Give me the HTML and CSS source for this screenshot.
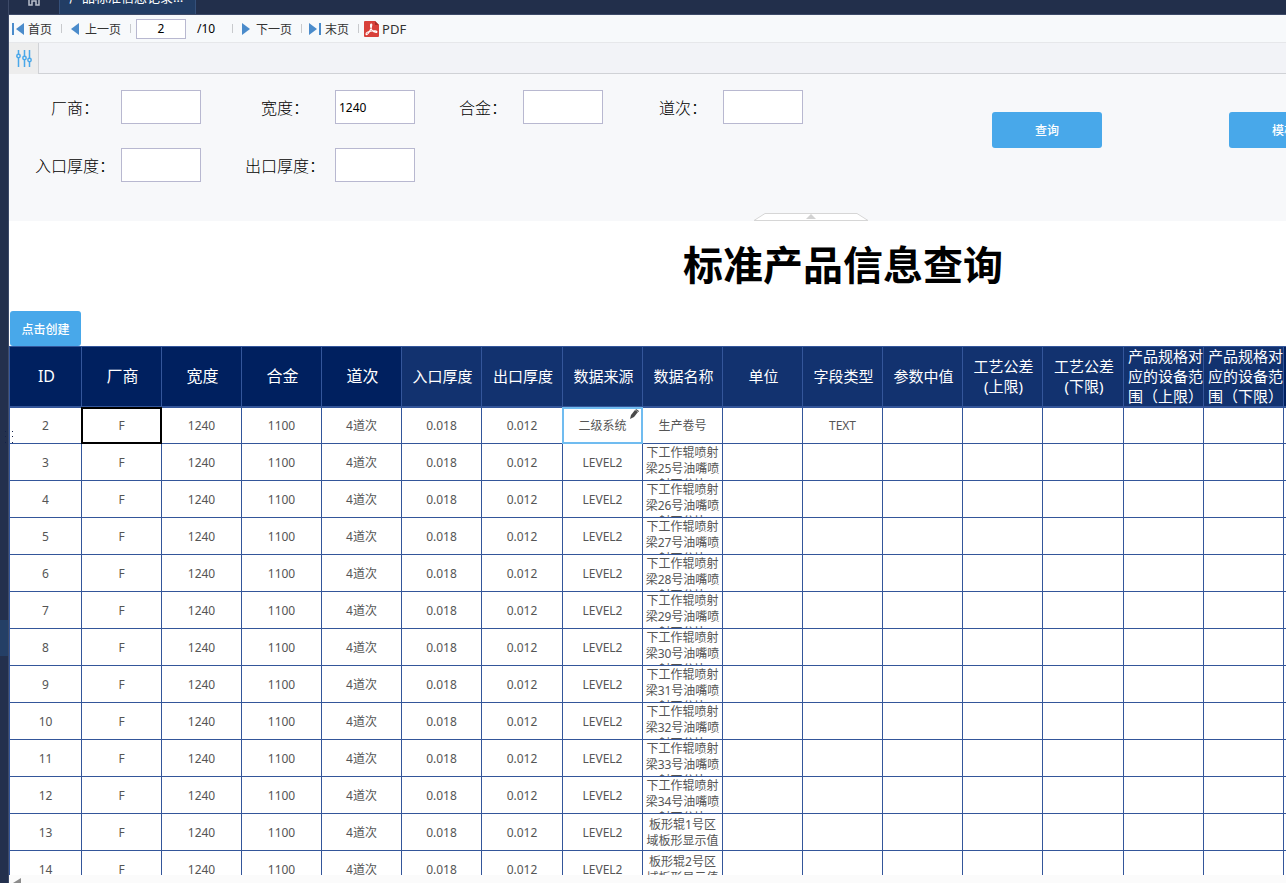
FILE: index.html
```html
<!DOCTYPE html>
<html lang="zh-CN">
<head>
    <meta charset="UTF-8">
    <title>标准产品信息查询</title>
    <link rel="stylesheet" href="styles.css">
</head>
<body>
    <aside class="sidebar">
        <div class="sidebar-active"></div>
        <svg class="sidebar-grip" width="8" height="12" viewBox="0 0 8 12" fill="#14224a"><path d="M0 0h1v1H0zM0 5h1v1H0zM0 11h1v1H0zM7 0h1v1H7zM7 5h1v1H7zM7 11h1v1H7z"/></svg>
    </aside>

    <div class="main">
        <nav class="tabs">
            <a href="#" class="tab-home" aria-label="首页">
                <svg width="14" height="14" viewBox="0 0 14 14" fill="none" stroke="#b9c0cc" stroke-width="1.5">
                    <path d="M1 7l6-6 6 6M2 6v7h3V9h4v4h3V6"/>
                </svg>
            </a>
            <a href="#" class="tab">产品标准信息记录…</a>
        </nav>

        <div class="toolbar">
            <button class="tool">
                <svg width="12" height="12" viewBox="0 0 12 12" fill="#4a8bcb"><path d="M0 0h2v12H0zM12 0v12L4 6z"/></svg>首页
            </button>
            <span class="sep"></span>
            <button class="tool tool-prev">
                <svg width="8" height="12" viewBox="0 0 8 12" fill="#4a8bcb"><path d="M8 0v12L0 6z"/></svg>上一页
            </button>
            <span class="sep"></span>
            <input class="page-input" type="text" value="2" aria-label="页码">
            <span class="page-total">/10</span>
            <span class="sep"></span>
            <button class="tool tool-next">
                <svg width="8" height="12" viewBox="0 0 8 12" fill="#4a8bcb"><path d="M0 0v12l8-6z"/></svg>下一页
            </button>
            <span class="sep"></span>
            <button class="tool tool-last">
                <svg width="12" height="12" viewBox="0 0 12 12" fill="#4a8bcb"><path d="M0 0v12l8-6zM10 0h2v12h-2z"/></svg>末页
            </button>
            <span class="sep"></span>
            <button class="tool tool-pdf">
                <svg width="15" height="16" viewBox="0 0 15 16">
                    <path d="M1 0h10l4 4v11a1 1 0 0 1-1 1H1a1 1 0 0 1-1-1V1a1 1 0 0 1 1-1z" fill="#d8403a"/>
                    <path d="M11 0l4 4h-4z" fill="#a82a25"/>
                    <path d="M2 13c0-1.500 3-2.600 6-3 2-.3 5-.2 5 .8 0 1.200-3 .4-4.500-1C7 8.300 6.300 5 6.600 3.600c.3-1 1.200-.7 1.200.5 0 2-1.600 5.600-3 7.700C3.800 13.300 2 14.300 2 13z" fill="none" stroke="#fff" stroke-width="1.100"/>
                </svg>PDF
            </button>
        </div>

        <div class="param-bar">
            <button class="param-toggle" aria-label="参数面板">
                <svg width="16" height="17" viewBox="0 0 16 17" fill="none" stroke="#4aa8ea" stroke-width="1.500">
                    <path d="M2.500 0v4M2.500 8v9M8.500 0v6M8.500 10v7M13.500 0v8M13.500 12v5"/>
                    <circle cx="2.500" cy="6" r="1.700"/><circle cx="8.500" cy="8" r="1.700"/><circle cx="13.500" cy="10" r="1.700"/>
                </svg>
            </button>
        </div>

        <form class="query">
            <div class="fields">
                <div class="field"><label for="vendor">厂商：</label><input id="vendor" type="text"></div>
                <div class="field field-wide"><label for="width">宽度：</label><input id="width" type="text" value="1240"></div>
                <div class="field field-narrow"><label for="alloy">合金：</label><input id="alloy" type="text"></div>
                <div class="field field-narrow"><label for="pass">道次：</label><input id="pass" type="text"></div>
                <div class="field"><label for="inlet">入口厚度：</label><input id="inlet" type="text"></div>
                <div class="field field-wide"><label for="outlet">出口厚度：</label><input id="outlet" type="text"></div>
            </div>
            <div class="actions">
                <button type="button" class="btn">查询</button>
                <button type="button" class="btn">模板</button>
            </div>
            <button type="button" class="collapse" aria-label="收起">
                <svg width="116" height="8" viewBox="0 0 116 8">
                    <path d="M1 7.500L12 .5h92l11 7z" fill="#fff" stroke="#d6d6d6"/>
                    <path d="M53 6l5-5 5 5z" fill="#d2d2d2"/>
                </svg>
            </button>
        </form>

        <div class="report">
            <h1>标准产品信息查询</h1>
            <button class="btn btn-create">点击创建</button>
            <table>
                <colgroup>
                    <col class="c-id"><col span="5" class="c"><col class="c-wide"><col span="6" class="c"><col class="c-wide"><col span="3" class="c">
                </colgroup>
                <thead>
                    <tr>
                        <th class="key">ID</th><th class="key">厂商</th><th class="key">宽度</th><th class="key">合金</th><th class="key">道次</th>
                        <th>入口厚度</th><th>出口厚度</th><th>数据来源</th><th>数据名称</th><th>单位</th><th>字段类型</th><th>参数中值</th>
                        <th>工艺公差<br>(上限)</th><th>工艺公差<br>(下限)</th><th><div class="long">产品规格对应的设备范围（上限）</div></th><th><div class="long">产品规格对应的设备范围（下限）</div></th><th class="key"></th>
                    </tr>
                </thead>
                <tbody>
                    <tr><td>2</td><td class="selected">F</td><td>1240</td><td>1100</td><td>4道次</td><td>0.018</td><td>0.012</td><td class="editing">二级系统<svg class="pen" width="9" height="10" viewBox="0 0 9 10" fill="#4a4a4a"><path d="M0 10l1-4 4-5 3 2-4 5z"/><path d="M6 0l3 2-.5 1-3-2z"/></svg></td><td>生产卷号</td><td></td><td>TEXT</td><td></td><td></td><td></td><td></td><td></td><td></td></tr>
                    <tr><td>3</td><td>F</td><td>1240</td><td>1100</td><td>4道次</td><td>0.018</td><td>0.012</td><td>LEVEL2</td><td><div class="clip">下工作辊喷射梁25号油嘴喷射百分比</div></td><td></td><td></td><td></td><td></td><td></td><td></td><td></td><td></td></tr>
                    <tr><td>4</td><td>F</td><td>1240</td><td>1100</td><td>4道次</td><td>0.018</td><td>0.012</td><td>LEVEL2</td><td><div class="clip">下工作辊喷射梁26号油嘴喷射百分比</div></td><td></td><td></td><td></td><td></td><td></td><td></td><td></td><td></td></tr>
                    <tr><td>5</td><td>F</td><td>1240</td><td>1100</td><td>4道次</td><td>0.018</td><td>0.012</td><td>LEVEL2</td><td><div class="clip">下工作辊喷射梁27号油嘴喷射百分比</div></td><td></td><td></td><td></td><td></td><td></td><td></td><td></td><td></td></tr>
                    <tr><td>6</td><td>F</td><td>1240</td><td>1100</td><td>4道次</td><td>0.018</td><td>0.012</td><td>LEVEL2</td><td><div class="clip">下工作辊喷射梁28号油嘴喷射百分比</div></td><td></td><td></td><td></td><td></td><td></td><td></td><td></td><td></td></tr>
                    <tr><td>7</td><td>F</td><td>1240</td><td>1100</td><td>4道次</td><td>0.018</td><td>0.012</td><td>LEVEL2</td><td><div class="clip">下工作辊喷射梁29号油嘴喷射百分比</div></td><td></td><td></td><td></td><td></td><td></td><td></td><td></td><td></td></tr>
                    <tr><td>8</td><td>F</td><td>1240</td><td>1100</td><td>4道次</td><td>0.018</td><td>0.012</td><td>LEVEL2</td><td><div class="clip">下工作辊喷射梁30号油嘴喷射百分比</div></td><td></td><td></td><td></td><td></td><td></td><td></td><td></td><td></td></tr>
                    <tr><td>9</td><td>F</td><td>1240</td><td>1100</td><td>4道次</td><td>0.018</td><td>0.012</td><td>LEVEL2</td><td><div class="clip">下工作辊喷射梁31号油嘴喷射百分比</div></td><td></td><td></td><td></td><td></td><td></td><td></td><td></td><td></td></tr>
                    <tr><td>10</td><td>F</td><td>1240</td><td>1100</td><td>4道次</td><td>0.018</td><td>0.012</td><td>LEVEL2</td><td><div class="clip">下工作辊喷射梁32号油嘴喷射百分比</div></td><td></td><td></td><td></td><td></td><td></td><td></td><td></td><td></td></tr>
                    <tr><td>11</td><td>F</td><td>1240</td><td>1100</td><td>4道次</td><td>0.018</td><td>0.012</td><td>LEVEL2</td><td><div class="clip">下工作辊喷射梁33号油嘴喷射百分比</div></td><td></td><td></td><td></td><td></td><td></td><td></td><td></td><td></td></tr>
                    <tr><td>12</td><td>F</td><td>1240</td><td>1100</td><td>4道次</td><td>0.018</td><td>0.012</td><td>LEVEL2</td><td><div class="clip">下工作辊喷射梁34号油嘴喷射百分比</div></td><td></td><td></td><td></td><td></td><td></td><td></td><td></td><td></td></tr>
                    <tr><td>13</td><td>F</td><td>1240</td><td>1100</td><td>4道次</td><td>0.018</td><td>0.012</td><td>LEVEL2</td><td>板形辊1号区域板形显示值</td><td></td><td></td><td></td><td></td><td></td><td></td><td></td><td></td></tr>
                    <tr><td>14</td><td>F</td><td>1240</td><td>1100</td><td>4道次</td><td>0.018</td><td>0.012</td><td>LEVEL2</td><td>板形辊2号区域板形显示值</td><td></td><td></td><td></td><td></td><td></td><td></td><td></td><td></td></tr>
                </tbody>
            </table>
        </div>

        <div class="hscroll">
            <svg width="9" height="10" viewBox="0 0 9 10" fill="#8c8c8c"><path d="M8 0v10L0 5z"/></svg>
        </div>
    </div>
</body>
</html>
```

FILE: styles.css
```css
* {
    box-sizing: border-box;
}

body {
    margin: 0;
    display: flex;
    height: 100vh;
    overflow: hidden;
    background: #fff;
    color: #555;
    font-family: "Noto Sans", "Noto Sans CJK SC", sans-serif;
    font-size: 12px;
}

button, input {
    font: inherit;
}

button {
    padding: 0;
    border: none;
    background: none;
    cursor: pointer;
}

svg {
    display: block;
    flex: none;
}

/* sidebar */
.sidebar {
    position: relative;
    flex: none;
    width: 9px;
    padding-top: 620px;
    background: #23304d;
    border-right: 1px solid #3d4a68;
}

.sidebar-active {
    height: 36px;
    background: #243f66;
}

.sidebar-grip {
    position: absolute;
    left: 5px;
    top: 431px;
    z-index: 1;
}

.main {
    flex: 1;
    min-width: 0;
    display: flex;
    flex-direction: column;
}

/* tabs */
.tabs {
    flex: none;
    display: flex;
    align-items: flex-end;
    height: 15px;
    overflow: hidden;
    background: #222f4b;
    border-bottom: 1px solid #3d4a68;
}

.tab-home {
    display: flex;
    justify-content: center;
    width: 50px;
    padding-bottom: 8px;
}

.tab {
    width: 137px;
    height: 31px;
    padding: 0 9px;
    background: #223d64;
    border: solid #35507a;
    border-width: 0 1px;
    color: #fff;
    font-size: 13px;
    line-height: 28px;
    text-decoration: none;
    white-space: nowrap;
}

/* toolbar */
.toolbar {
    flex: none;
    display: flex;
    align-items: center;
    gap: 9px;
    height: 28px;
    padding-left: 3px;
    background: #f7f9fb;
    border-bottom: 1px solid #e6e7ea;
    color: #333;
}

.tool {
    display: flex;
    align-items: center;
    gap: 4px;
    color: #333;
}

.tool-prev, .tool-next {
    gap: 6px;
}

.tool-last {
    margin-left: -2px;
}

.tool-pdf {
    gap: 3px;
    margin-left: -4px;
    font-size: 13px;
}

.sep {
    width: 1px;
    height: 9px;
    background: #c8cacd;
}

.page-input {
    width: 50px;
    height: 20px;
    margin-left: -4px;
    padding: 0;
    border: 1px solid #b8b8d0;
    background: #fff;
    color: #000;
    text-align: center;
}

.page-total {
    width: 28px;
    padding-left: 2px;
    color: #000;
}

.param-bar {
    flex: none;
    height: 31px;
    background: #f2f3f7;
    border-bottom: 1px solid #d0d2d6;
}

.param-toggle {
    display: grid;
    place-items: center;
    width: 30px;
    height: 31px;
    background: #ededed;
    border-right: 1px solid #d0d2d6;
}

/* query form */
.query {
    position: relative;
    flex: none;
    display: flex;
    height: 147px;
    padding-top: 16px;
    background: #f7f8fa;
}

.fields {
    flex: none;
    display: grid;
    grid-template-columns: 192px 214px 188px 200px;
    align-content: start;
    row-gap: 24px;
}

.field {
    display: flex;
    align-items: center;
    justify-content: flex-end;
}

.field label {
    width: 92px;
    color: #000;
    font-size: 16px;
    font-weight: 300;
    text-align: center;
    white-space: nowrap;
}

.field-wide label {
    width: 100px;
}

.field-narrow label {
    width: 80px;
}

.field input {
    width: 80px;
    height: 34px;
    padding: 0 3px;
    border: 1px solid #b8b8d0;
    background: #fff;
    color: #000;
}

.actions {
    flex: none;
    display: flex;
    align-items: flex-start;
    gap: 127px;
    padding: 22px 0 0 189px;
}

.btn {
    width: 110px;
    height: 36px;
    border-radius: 3px;
    background: #48a8ea;
    color: #fff;
    font-weight: 500;
}

.collapse {
    position: absolute;
    left: 744px;
    bottom: 0;
}

/* report */
.report {
    flex: 1;
    min-height: 0;
    overflow: hidden;
}

h1 {
    width: 1668px;
    margin: 0;
    padding-bottom: 2px;
    color: #000;
    font-size: 40px;
    font-weight: 700;
    line-height: 88px;
    text-align: center;
}

.btn-create {
    display: block;
    width: 71px;
    height: 35px;
    margin-left: 1px;
}

table {
    width: 1355px;
    table-layout: fixed;
    border-collapse: collapse;
}

.c-id {
    width: 72px;
}

.c {
    width: 80px;
}

.c-wide {
    width: 81px;
}

th {
    height: 60px;
    padding: 0 0 0 2px;
    background: #12326f;
    border: 1px solid #34569a;
    border-bottom-width: 2px;
    color: #fff;
    font-size: 15px;
    font-weight: 400;
    line-height: 20px;
}

.key {
    background: #00205f;
    font-size: 16px;
}

.long {
    margin: -1px 0;
    padding-left: 2px;
    text-align: left;
}

td {
    position: relative;
    height: 37px;
    padding: 2px 2px 0;
    border: 1px solid #34569a;
    line-height: 16px;
    text-align: center;
}

.clip {
    height: 35px;
    margin-top: -1px;
    overflow: hidden;
}

.selected::after, .editing::after {
    content: "";
    position: absolute;
    inset: -1px;
    border: 2px solid #000;
}

.editing::after {
    border-color: #70bcf0;
}

.pen {
    position: absolute;
    top: 1px;
    right: 3px;
}

.hscroll {
    flex: none;
    height: 8px;
    padding: 3px 4px;
    overflow: hidden;
    background: #fbfbfb;
}
```
